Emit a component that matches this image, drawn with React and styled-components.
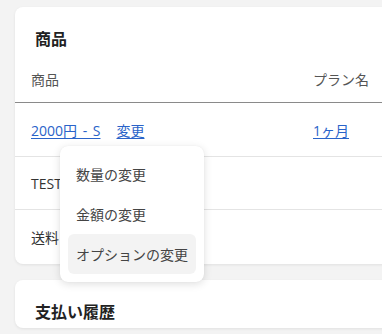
import React from "react";
import styled, { createGlobalStyle } from "styled-components";

const Global = createGlobalStyle`
  html, body { margin: 0; padding: 0; background: #f3f3f3; overflow: hidden; }
  body { font-family: "Open Sans", "Noto Sans CJK JP", sans-serif; color: #222; }
  * { box-sizing: border-box; }
`;

const Page = styled.div`
  padding: 7px 0 0 15px;
  display: flex;
  flex-direction: column;
  gap: 16px;
  width: 420px;
  height: 334px;
`;

const Card = styled.section`
  background: #fff;
  border-radius: 8px;
  box-shadow: 0 1px 3px rgba(0, 0, 0, 0.08);
  width: 405px;
  position: relative;
`;

const Title = styled.h2`
  margin: 0;
  padding: 20px 20px 0;
  height: 48px;
  font-size: 16px;
  line-height: 24px;
  font-weight: 700;
  color: #222;
`;

const Table = styled.div`
  display: grid;
  grid-template-columns: 282px 1fr;
`;

const HeadCell = styled.div`
  height: 48px;
  display: flex;
  align-items: center;
  padding: 0 16px;
  font-size: 14px;
  color: #555;
  border-bottom: 1px solid #8a8a8a;
`;

const Cell = styled.div`
  height: ${(p) => (p.$h ? p.$h : 54)}px;
  display: flex;
  align-items: center;
  gap: 16px;
  padding: 0 16px;
  font-size: 14px;
  color: #333;
  border-bottom: ${(p) => (p.$last ? "none" : "1px solid #e4e4e4")};
  position: relative;
`;

const Link = styled.a`
  color: #2a63c9;
  text-decoration: underline;
  text-underline-offset: 2px;
  word-spacing: 2px;
  cursor: pointer;
`;

const Menu = styled.div`
  position: absolute;
  left: 45px;
  top: 43px;
  width: 144px;
  padding: 8px;
  background: #fff;
  border-radius: 8px;
  box-shadow: 0 2px 8px rgba(0, 0, 0, 0.13), 0 0 1px rgba(0, 0, 0, 0.08);
  display: flex;
  flex-direction: column;
  z-index: 10;
`;

const MenuItem = styled.div`
  height: 40px;
  display: flex;
  align-items: center;
  padding: 0 8px;
  border-radius: 6px;
  font-size: 14px;
  color: #444;
  background: ${(p) => (p.$active ? "#f3f3f3" : "transparent")};
`;

export default function App() {
  return (
    <>
      <Global />
      <Page>
        <Card>
          <Title>商品</Title>
          <Table>
            <HeadCell>商品</HeadCell>
            <HeadCell>プラン名</HeadCell>
            <Cell>
              <Link>2000円 - S</Link>
              <Link>変更</Link>
              <Menu>
                <MenuItem>数量の変更</MenuItem>
                <MenuItem>金額の変更</MenuItem>
                <MenuItem $active>オプションの変更</MenuItem>
              </Menu>
            </Cell>
            <Cell>
              <Link>1ヶ月</Link>
            </Cell>
            <Cell $h={53}>TEST</Cell>
            <Cell $h={53}></Cell>
            <Cell $last>送料</Cell>
            <Cell $last></Cell>
          </Table>
        </Card>
        <Card>
          <Title>支払い履歴</Title>
        </Card>
      </Page>
    </>
  );
}
